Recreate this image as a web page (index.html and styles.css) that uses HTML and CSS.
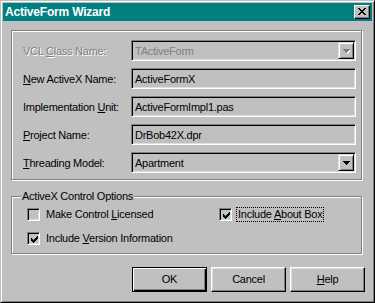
FILE: index.html
```html
<!DOCTYPE html>
<html>
<head>
<meta charset="utf-8">
<link rel="stylesheet" href="styles.css">
</head>
<body>
<div class="window">
  <div class="titlebar">
    <span class="title">ActiveForm Wizard</span>
    <span class="close">
      <svg width="8" height="7" viewBox="0 0 8 7" shape-rendering="crispEdges"><path d="M0 0h2v1h-2zM6 0h2v1h-2zM1 1h2v1h-2zM5 1h2v1h-2zM2 2h4v1h-4zM3 3h2v1h-2zM2 4h4v1h-4zM1 5h2v1h-2zM5 5h2v1h-2zM0 6h2v1h-2zM6 6h2v1h-2z" fill="#000"/></svg>
    </span>
  </div>
  <div class="content">
    <div class="panel">
      <div class="row">
        <span class="label disabled">VCL <u>C</u>lass Name:</span>
        <div class="field combo is-disabled">
          <span class="value">TActiveForm</span>
          <span class="drop"><svg width="7" height="5" viewBox="0 0 7 5" shape-rendering="crispEdges"><path d="M1 1h7v1h-7zM2 2h5v1h-5zM3 3h3v1h-3zM4 4h1v1h-1z" fill="#fff"/><path d="M0 0h7v1h-7zM1 1h5v1h-5zM2 2h3v1h-3zM3 3h1v1h-1z" fill="#808080"/></svg></span>
        </div>
      </div>
      <div class="row">
        <span class="label"><u>N</u>ew ActiveX Name:</span>
        <div class="field"><span class="value">ActiveFormX</span></div>
      </div>
      <div class="row">
        <span class="label">Implementation <u>U</u>nit:</span>
        <div class="field"><span class="value">ActiveFormImpl1.pas</span></div>
      </div>
      <div class="row">
        <span class="label"><u>P</u>roject Name:</span>
        <div class="field"><span class="value">DrBob42X.dpr</span></div>
      </div>
      <div class="row">
        <span class="label"><u>T</u>hreading Model:</span>
        <div class="field combo">
          <span class="value">Apartment</span>
          <span class="drop"><svg width="7" height="4" viewBox="0 0 7 4" shape-rendering="crispEdges"><path d="M0 0h7v1h-7zM1 1h5v1h-5zM2 2h3v1h-3zM3 3h1v1h-1z" fill="#000"/></svg></span>
        </div>
      </div>
    </div>

    <div class="group">
      <span class="legend">ActiveX Control Options</span>
      <div class="checks">
        <div class="check">
          <span class="box"></span>
          <span class="ctext">Make Control <u>L</u>icensed</span>
        </div>
        <div class="check">
          <span class="box"><svg width="7" height="7" viewBox="0 0 7 7" shape-rendering="crispEdges"><path d="M6 0h1v3h-1zM5 1h1v3h-1zM4 2h1v3h-1zM0 2h1v3h-1zM1 3h1v3h-1zM2 4h1v3h-1zM3 3h1v3h-1z" fill="#000"/></svg></span>
          <span class="ctext focus">Include <u>A</u>bout Box</span>
        </div>
        <div class="check">
          <span class="box"><svg width="7" height="7" viewBox="0 0 7 7" shape-rendering="crispEdges"><path d="M6 0h1v3h-1zM5 1h1v3h-1zM4 2h1v3h-1zM0 2h1v3h-1zM1 3h1v3h-1zM2 4h1v3h-1zM3 3h1v3h-1z" fill="#000"/></svg></span>
          <span class="ctext">Include <u>V</u>ersion Information</span>
        </div>
      </div>
    </div>

    <div class="buttons">
      <div class="btn default"><span class="btn-inner">OK</span></div>
      <div class="btn"><span class="btn-inner">Cancel</span></div>
      <div class="btn"><span class="btn-inner"><u>H</u>elp</span></div>
    </div>
  </div>
</div>
</body>
</html>
```

FILE: styles.css
```css
html, body {
  margin: 0;
  padding: 0;
  background: #c0c0c0;
}

body {
  font-family: "Liberation Sans", Arial, sans-serif;
  font-size: 11px;
  letter-spacing: -0.25px;
  color: #000;
}

u {
  text-decoration: underline;
  text-underline-offset: 1px;
}

.window {
  box-sizing: border-box;
  width: 375px;
  height: 303px;
  background: #c0c0c0;
  border: 1px solid;
  border-color: #c0c0c0 #000 #000 #c0c0c0;
  box-shadow: inset 1px 1px 0 #fff, inset -1px -1px 0 #808080;
  padding: 2px;
  display: flex;
  flex-direction: column;
}

.titlebar {
  height: 18px;
  background: #008080;
  display: flex;
  align-items: center;
  justify-content: space-between;
  padding: 0 2px 0 2px;
}

.title {
  color: #fff;
  font-weight: bold;
  font-size: 12px;
  letter-spacing: -0.2px;
  line-height: 18px;
}

.close {
  box-sizing: border-box;
  width: 16px;
  height: 14px;
  background: #c0c0c0;
  border: 1px solid;
  border-color: #fff #000 #000 #fff;
  box-shadow: inset -1px -1px 0 #808080;
  display: flex;
  align-items: center;
  justify-content: center;
  padding: 0 1px 1px 0;
}

.close svg { display: block; }

.content {
  display: flex;
  flex-direction: column;
  padding: 9px 10px 0 8px;
}

.panel {
  border: 1px solid #808080;
  box-shadow: 1px 1px 0 #fff, inset 1px 1px 0 #fff;
  padding: 9px 5px 6px 11px;
  display: flex;
  flex-direction: column;
  gap: 7px;
}

.row {
  display: flex;
  align-items: center;
  height: 21px;
}

.label {
  width: 108px;
  flex: none;
  white-space: nowrap;
}

.label.disabled {
  color: #808080;
  text-shadow: 1px 1px 0 #fff;
}

.field {
  box-sizing: border-box;
  width: 225px;
  height: 21px;
  border: 1px solid;
  border-color: #808080 #fff #fff #808080;
  box-shadow: inset 1px 1px 0 #000, inset -1px -1px 0 #dfdfdf;
  padding: 1px 1px 1px 2px;
  display: flex;
  align-items: center;
  justify-content: space-between;
}

.value {
  white-space: nowrap;
  padding-left: 1px;
}

.combo.is-disabled .value {
  color: #808080;
}

.drop {
  box-sizing: border-box;
  width: 16px;
  height: 17px;
  border: 1px solid;
  border-color: #dfdfdf #000 #000 #dfdfdf;
  box-shadow: inset 1px 1px 0 #fff, inset -1px -1px 0 #808080;
  display: flex;
  align-items: center;
  justify-content: center;
  padding-top: 1px;
}

.drop svg { display: block; }

.group {
  position: relative;
  margin-top: 16px;
  border: 1px solid #808080;
  box-shadow: 1px 1px 0 #fff, inset 1px 1px 0 #fff;
  padding: 11px 10px 8px 15px;
}

.legend {
  position: absolute;
  top: -7px;
  left: 9px;
  padding: 0 1px;
  background: #c0c0c0;
  line-height: 13px;
  white-space: nowrap;
}

.checks {
  display: grid;
  grid-template-columns: 192px 1fr;
  row-gap: 11px;
}

.check {
  display: flex;
  align-items: center;
  height: 13px;
  white-space: nowrap;
}

.box {
  box-sizing: border-box;
  width: 13px;
  height: 13px;
  flex: none;
  background: #c0c0c0;
  border: 1px solid;
  border-color: #808080 #fff #fff #808080;
  box-shadow: inset 1px 1px 0 #000, inset -1px -1px 0 #dfdfdf;
  display: flex;
  align-items: center;
  justify-content: center;
  padding: 1px 0 0 1px;
}

.box svg { display: block; }

.ctext {
  margin-left: 4px;
  padding: 0 1px;
  border: 1px solid transparent;
  line-height: 13px;
}

.ctext.focus {
  border: 1px dotted #000;
}

.buttons {
  display: flex;
  justify-content: flex-end;
  gap: 4px;
  margin-top: 13px;
  margin-right: -3px;
}

.btn {
  box-sizing: border-box;
  width: 75px;
  height: 25px;
  border: 1px solid;
  border-color: #fff #000 #000 #fff;
  box-shadow: inset -1px -1px 0 #808080, inset 1px 1px 0 #dfdfdf;
  display: flex;
  align-items: center;
  justify-content: center;
}

.btn.default {
  border: 1px solid #000;
  box-shadow: inset 1px 1px 0 #fff, inset -1px -1px 0 #000, inset -2px -2px 0 #808080;
}

.btn-inner {
  line-height: 13px;
}
```
